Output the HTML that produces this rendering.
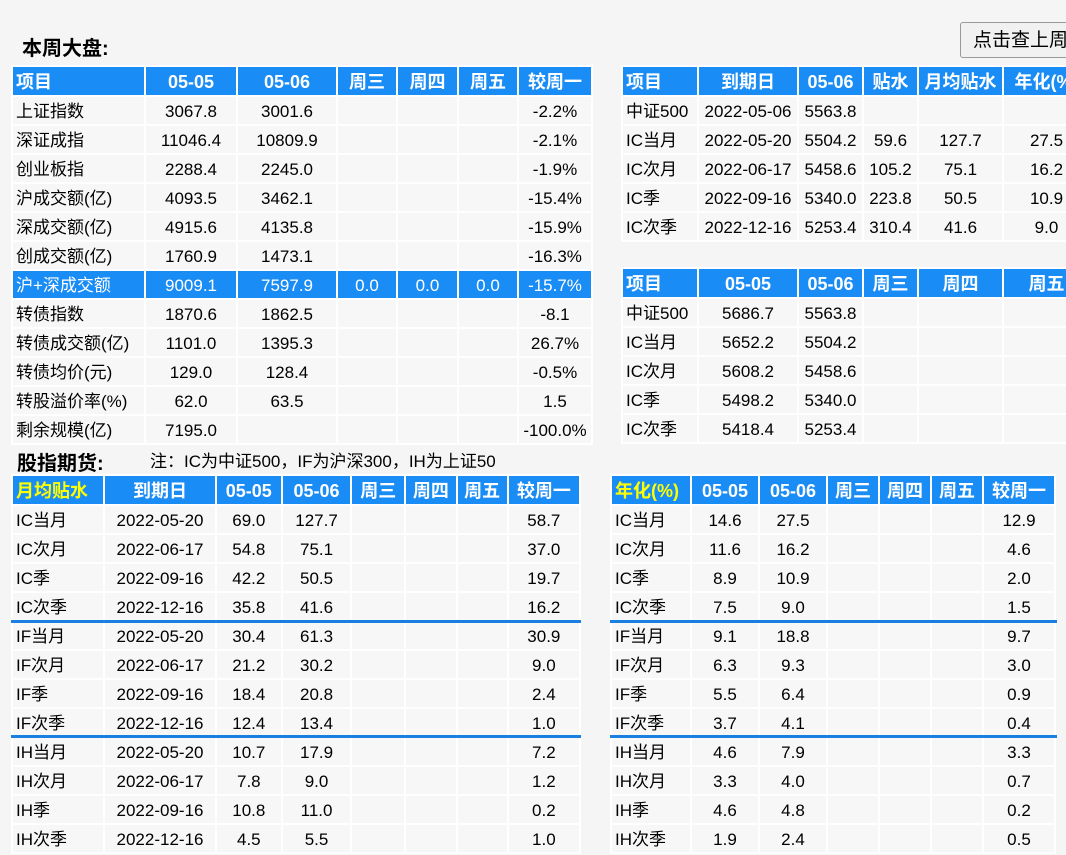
<!DOCTYPE html>
<html><head><meta charset="utf-8"><style>
body{margin:0;background:#f5f5f5;width:1066px;height:855px;overflow:hidden;position:relative;font-family:"Liberation Sans","Noto Sans CJK SC",sans-serif;font-size:17px;color:#000}
table{position:absolute;table-layout:fixed;border-collapse:separate;border-spacing:2px;background:#fff}
td{height:27px;max-height:27px;padding:2px 3px 0;background:#f7f7f7;text-align:center;white-space:nowrap;overflow:hidden;box-sizing:border-box;line-height:24px}
td:first-child{text-align:left}
tr.h td{background:#1a8cf5;color:#fff;font-weight:bold;font-size:18px;height:28px}
tr.hl td{background:#1a8cf5;color:#fff}
.y{color:#ffff00!important}
.t{position:absolute;font-weight:bold;font-size:20px}
.line{position:absolute;height:3px;background:#1a7fe0}
.btn{position:absolute;left:960px;top:22px;width:130px;height:36px;border:1px solid #999;border-radius:3px;background:#f1f1f1;font-size:19px;line-height:36px;padding-left:12px;box-sizing:border-box;white-space:nowrap}
</style></head><body>
<div class="t" style="left:22px;top:32px">本周大盘:</div>
<div class="btn">点击查上周</div>

<table style="left:11px;top:65px;width:582px">
<colgroup><col style="width:131px"><col style="width:90px"><col style="width:98px"><col style="width:58px"><col style="width:59px"><col style="width:58px"><col style="width:72px"></colgroup>
<tr class="h"><td>项目</td><td>05-05</td><td>05-06</td><td>周三</td><td>周四</td><td>周五</td><td>较周一</td></tr>
<tr><td>上证指数</td><td>3067.8</td><td>3001.6</td><td></td><td></td><td></td><td>-2.2%</td></tr>
<tr><td>深证成指</td><td>11046.4</td><td>10809.9</td><td></td><td></td><td></td><td>-2.1%</td></tr>
<tr><td>创业板指</td><td>2288.4</td><td>2245.0</td><td></td><td></td><td></td><td>-1.9%</td></tr>
<tr><td>沪成交额(亿)</td><td>4093.5</td><td>3462.1</td><td></td><td></td><td></td><td>-15.4%</td></tr>
<tr><td>深成交额(亿)</td><td>4915.6</td><td>4135.8</td><td></td><td></td><td></td><td>-15.9%</td></tr>
<tr><td>创成交额(亿)</td><td>1760.9</td><td>1473.1</td><td></td><td></td><td></td><td>-16.3%</td></tr>
<tr class="hl"><td>沪+深成交额</td><td>9009.1</td><td>7597.9</td><td>0.0</td><td>0.0</td><td>0.0</td><td>-15.7%</td></tr>
<tr><td>转债指数</td><td>1870.6</td><td>1862.5</td><td></td><td></td><td></td><td>-8.1</td></tr>
<tr><td>转债成交额(亿)</td><td>1101.0</td><td>1395.3</td><td></td><td></td><td></td><td>26.7%</td></tr>
<tr><td>转债均价(元)</td><td>129.0</td><td>128.4</td><td></td><td></td><td></td><td>-0.5%</td></tr>
<tr><td>转股溢价率(%)</td><td>62.0</td><td>63.5</td><td></td><td></td><td></td><td>1.5</td></tr>
<tr><td>剩余规模(亿)</td><td>7195.0</td><td></td><td></td><td></td><td></td><td>-100.0%</td></tr>
</table>

<table style="left:621px;top:65px;width:470px">
<colgroup><col style="width:74px"><col style="width:98px"><col style="width:63px"><col style="width:53px"><col style="width:83px"><col style="width:85px"></colgroup>
<tr class="h"><td>项目</td><td>到期日</td><td>05-06</td><td>贴水</td><td>月均贴水</td><td>年化(%)</td></tr>
<tr><td>中证500</td><td>2022-05-06</td><td>5563.8</td><td></td><td></td><td></td></tr>
<tr><td>IC当月</td><td>2022-05-20</td><td>5504.2</td><td>59.6</td><td>127.7</td><td>27.5</td></tr>
<tr><td>IC次月</td><td>2022-06-17</td><td>5458.6</td><td>105.2</td><td>75.1</td><td>16.2</td></tr>
<tr><td>IC季</td><td>2022-09-16</td><td>5340.0</td><td>223.8</td><td>50.5</td><td>10.9</td></tr>
<tr><td>IC次季</td><td>2022-12-16</td><td>5253.4</td><td>310.4</td><td>41.6</td><td>9.0</td></tr>
</table>

<table style="left:621px;top:267px;width:470px">
<colgroup><col style="width:74px"><col style="width:98px"><col style="width:63px"><col style="width:53px"><col style="width:83px"><col style="width:85px"></colgroup>
<tr class="h"><td>项目</td><td>05-05</td><td>05-06</td><td>周三</td><td>周四</td><td>周五</td></tr>
<tr><td>中证500</td><td>5686.7</td><td>5563.8</td><td></td><td></td><td></td></tr>
<tr><td>IC当月</td><td>5652.2</td><td>5504.2</td><td></td><td></td><td></td></tr>
<tr><td>IC次月</td><td>5608.2</td><td>5458.6</td><td></td><td></td><td></td></tr>
<tr><td>IC季</td><td>5498.2</td><td>5340.0</td><td></td><td></td><td></td></tr>
<tr><td>IC次季</td><td>5418.4</td><td>5253.4</td><td></td><td></td><td></td></tr>
</table>

<div class="t" style="left:17px;top:447px">股指期货:</div>
<div style="position:absolute;left:150px;top:447px;font-size:17px">注：IC为中证500，IF为沪深300，IH为上证50</div>

<table style="left:11px;top:474px;width:570px">
<colgroup><col style="width:90px"><col style="width:109px"><col style="width:64px"><col style="width:67px"><col style="width:52px"><col style="width:49px"><col style="width:49px"><col style="width:70px"></colgroup>
<tr class="h"><td class="y">月均贴水</td><td>到期日</td><td>05-05</td><td>05-06</td><td>周三</td><td>周四</td><td>周五</td><td>较周一</td></tr>
<tr><td>IC当月</td><td>2022-05-20</td><td>69.0</td><td>127.7</td><td></td><td></td><td></td><td>58.7</td></tr>
<tr><td>IC次月</td><td>2022-06-17</td><td>54.8</td><td>75.1</td><td></td><td></td><td></td><td>37.0</td></tr>
<tr><td>IC季</td><td>2022-09-16</td><td>42.2</td><td>50.5</td><td></td><td></td><td></td><td>19.7</td></tr>
<tr><td>IC次季</td><td>2022-12-16</td><td>35.8</td><td>41.6</td><td></td><td></td><td></td><td>16.2</td></tr>
<tr><td>IF当月</td><td>2022-05-20</td><td>30.4</td><td>61.3</td><td></td><td></td><td></td><td>30.9</td></tr>
<tr><td>IF次月</td><td>2022-06-17</td><td>21.2</td><td>30.2</td><td></td><td></td><td></td><td>9.0</td></tr>
<tr><td>IF季</td><td>2022-09-16</td><td>18.4</td><td>20.8</td><td></td><td></td><td></td><td>2.4</td></tr>
<tr><td>IF次季</td><td>2022-12-16</td><td>12.4</td><td>13.4</td><td></td><td></td><td></td><td>1.0</td></tr>
<tr><td>IH当月</td><td>2022-05-20</td><td>10.7</td><td>17.9</td><td></td><td></td><td></td><td>7.2</td></tr>
<tr><td>IH次月</td><td>2022-06-17</td><td>7.8</td><td>9.0</td><td></td><td></td><td></td><td>1.2</td></tr>
<tr><td>IH季</td><td>2022-09-16</td><td>10.8</td><td>11.0</td><td></td><td></td><td></td><td>0.2</td></tr>
<tr><td>IH次季</td><td>2022-12-16</td><td>4.5</td><td>5.5</td><td></td><td></td><td></td><td>1.0</td></tr>
</table>

<table style="left:610px;top:474px;width:446px">
<colgroup><col style="width:78px"><col style="width:66px"><col style="width:66px"><col style="width:50px"><col style="width:50px"><col style="width:50px"><col style="width:70px"></colgroup>
<tr class="h"><td class="y">年化(%)</td><td>05-05</td><td>05-06</td><td>周三</td><td>周四</td><td>周五</td><td>较周一</td></tr>
<tr><td>IC当月</td><td>14.6</td><td>27.5</td><td></td><td></td><td></td><td>12.9</td></tr>
<tr><td>IC次月</td><td>11.6</td><td>16.2</td><td></td><td></td><td></td><td>4.6</td></tr>
<tr><td>IC季</td><td>8.9</td><td>10.9</td><td></td><td></td><td></td><td>2.0</td></tr>
<tr><td>IC次季</td><td>7.5</td><td>9.0</td><td></td><td></td><td></td><td>1.5</td></tr>
<tr><td>IF当月</td><td>9.1</td><td>18.8</td><td></td><td></td><td></td><td>9.7</td></tr>
<tr><td>IF次月</td><td>6.3</td><td>9.3</td><td></td><td></td><td></td><td>3.0</td></tr>
<tr><td>IF季</td><td>5.5</td><td>6.4</td><td></td><td></td><td></td><td>0.9</td></tr>
<tr><td>IF次季</td><td>3.7</td><td>4.1</td><td></td><td></td><td></td><td>0.4</td></tr>
<tr><td>IH当月</td><td>4.6</td><td>7.9</td><td></td><td></td><td></td><td>3.3</td></tr>
<tr><td>IH次月</td><td>3.3</td><td>4.0</td><td></td><td></td><td></td><td>0.7</td></tr>
<tr><td>IH季</td><td>4.6</td><td>4.8</td><td></td><td></td><td></td><td>0.2</td></tr>
<tr><td>IH次季</td><td>1.9</td><td>2.4</td><td></td><td></td><td></td><td>0.5</td></tr>
</table>

<div class="line" style="left:11px;top:620px;width:570px"></div>
<div class="line" style="left:11px;top:735px;width:570px"></div>
<div class="line" style="left:610px;top:620px;width:447px"></div>
<div class="line" style="left:610px;top:735px;width:447px"></div>
</body></html>
